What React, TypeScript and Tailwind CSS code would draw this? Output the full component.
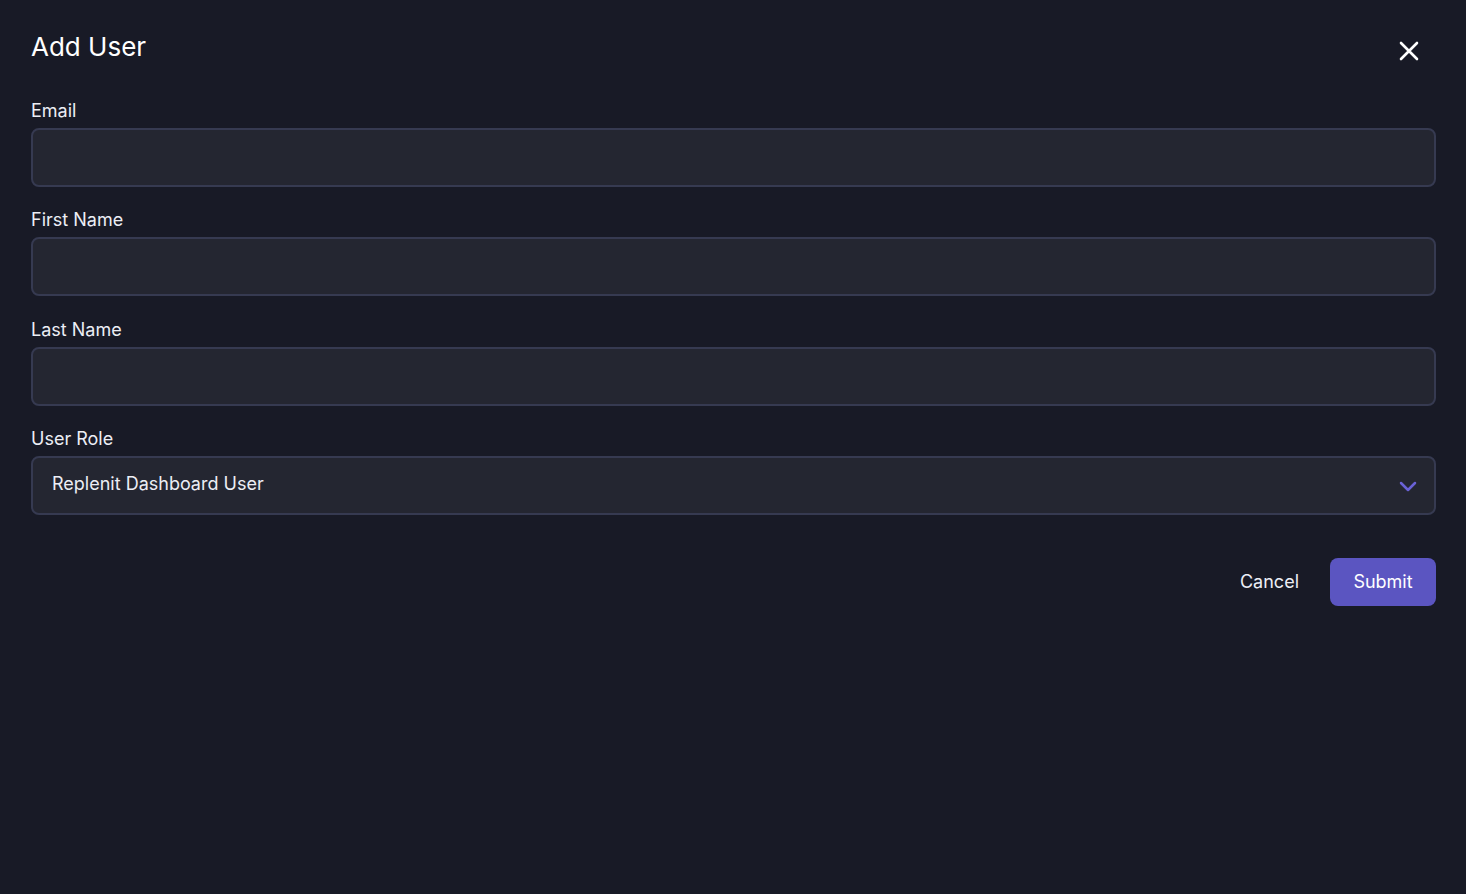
import React from "react";

function Field({ label, children }: { label: string; children?: React.ReactNode }) {
  return (
    <div className="flex flex-col gap-[5px]">
      <label className="text-[18px] leading-[24px] text-[#eceef5]">{label}</label>
      {children ?? (
        <input
          className="h-[59px] w-full rounded-[8px] border-2 border-[#363a51] bg-[#242631] px-5 text-[18px] text-white outline-none"
          type="text"
        />
      )}
    </div>
  );
}

export default function App() {
  return (
    <div
      className="min-h-[894px] w-full bg-[#181a26] pl-[31px] pr-[30px] pt-[30px]"
      style={{ fontFamily: "Inter, 'Noto Sans', sans-serif" }}
    >
      <div className="flex h-[32px] items-center justify-between">
        <h1 className="mt-[1px] text-[26px] leading-[32px] font-normal text-white">Add User</h1>
        <button className="mr-[17px] mt-[10px] text-white">
          <svg width="20" height="20" viewBox="0 0 20 20" fill="none" stroke="currentColor" strokeWidth="2.6" strokeLinecap="round">
            <path d="M2 2 L18 18 M18 2 L2 18" />
          </svg>
        </button>
      </div>
      <div className="mt-[37px] flex flex-col gap-[21.4px]">
        <Field label="Email" />
        <Field label="First Name" />
        <Field label="Last Name" />
        <Field label="User Role">
          <div className="flex h-[59px] w-full items-center justify-between rounded-[8px] border-2 border-[#363a51] bg-[#242631] pl-[19px] pr-[16px]">
            <span className="mb-[4px] text-[18px] text-[#eceef5]">Replenit Dashboard User</span>
            <svg width="20" height="14" viewBox="0 0 20 14" fill="none" stroke="#6a62d6" strokeWidth="2.5" strokeLinecap="round" strokeLinejoin="round">
              <path d="M3 4 L10 11 L17 4" />
            </svg>
          </div>
        </Field>
      </div>
      <div className="mt-[43px] flex items-center justify-end gap-[31px]">
        <button className="pb-[2px] text-[18px] text-[#eceef5]">Cancel</button>
        <button className="h-[48px] w-[106px] rounded-[8px] bg-[#5b55c1] pb-[2px] text-[18px] text-white">Submit</button>
      </div>
    </div>
  );
}
